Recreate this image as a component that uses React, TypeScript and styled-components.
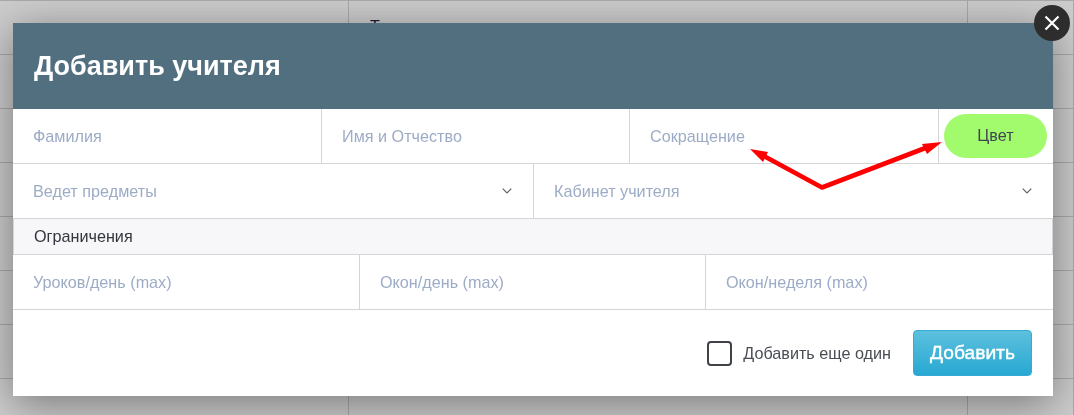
import React from "react";
import styled, { createGlobalStyle } from "styled-components";

const GlobalStyle = createGlobalStyle`
	html, body {
		margin: 0;
		padding: 0;
		height: 100%;
		overflow: hidden;
		background: #fff;
		font-family: "Liberation Sans", Arial, sans-serif;
	}
`;

const ScheduleTable = styled.div`
	display: flex;
	flex-direction: column;
	width: 1074px;
`;

const ScheduleRow = styled.div`
	border-top: 1px solid #d4d4d4;
	box-sizing: border-box;
	display: grid;
	grid-template-columns: 349px 619px 1fr;
	height: 54px;
`;

const ScheduleCell = styled.div`
	border-right: 1px solid #d4d4d4;
	box-sizing: border-box;
	color: #1d2b4f;
	font-size: 16px;
	padding: 17px 21px;
`;

const Overlay = styled.div`
	background: rgba(0, 0, 0, 0.2);
	inset: 0;
	position: fixed;
`;

const Modal = styled.div`
	background: #fff;
	box-shadow: 0 8px 40px rgba(0, 0, 0, 0.42);
	display: flex;
	flex-direction: column;
	left: 13px;
	position: absolute;
	top: 23px;
	width: 1040px;
`;

const Header = styled.div`
	align-items: center;
	background: #526f80;
	box-sizing: border-box;
	display: flex;
	height: 86px;
	padding: 0 21px;
`;

const Title = styled.h2`
	color: #fff;
	font-size: 27px;
	font-weight: bold;
	margin: 0;
`;

const CloseButton = styled.button`
	align-items: center;
	background: #2d2d2d;
	border: 0;
	border-radius: 50%;
	display: flex;
	height: 36px;
	justify-content: center;
	padding: 0;
	position: absolute;
	right: -17px;
	top: -18px;
	width: 36px;
`;

const FieldRow = styled.div<{ $columns: string }>`
	border-bottom: 1px solid #d5d5d5;
	box-sizing: border-box;
	display: grid;
	grid-template-columns: ${({ $columns }) => $columns};
	height: 55px;
`;

const Field = styled.div`
	align-items: center;
	border-right: 1px solid #d5d5d5;
	box-sizing: border-box;
	color: #9dacc6;
	display: flex;
	font-size: 16.2px;
	justify-content: space-between;
	padding: 0 21px 0 20px;

	&:last-child {
		border-right: 0;
	}
`;

const ColorCell = styled.div`
	align-items: center;
	display: flex;
	justify-content: flex-end;
	padding-right: 6px;
`;

const ColorPill = styled.div`
	align-items: center;
	background: #a2fb6d;
	border-radius: 22px;
	box-sizing: border-box;
	color: #3f4650;
	display: flex;
	font-size: 16.2px;
	height: 44px;
	justify-content: center;
	padding-bottom: 2px;
	width: 103px;
`;

const SectionTitle = styled.div`
	align-items: center;
	background: #f7f7f9;
	border-bottom: 1px solid #d5d5d5;
	border-left: 1px solid #d5d5d5;
	border-right: 1px solid #d5d5d5;
	box-sizing: border-box;
	color: #33363d;
	display: flex;
	font-size: 16.2px;
	height: 36px;
	padding: 0 20px;
`;

const Footer = styled.div`
	align-items: center;
	display: flex;
	height: 86px;
	justify-content: flex-end;
	padding-right: 21px;
`;

const CheckLabel = styled.label`
	align-items: center;
	color: #4a4d55;
	display: flex;
	font-size: 16.2px;
	gap: 11px;
	margin-right: 22px;
`;

const CheckBox = styled.span`
	border: 2px solid #3f4246;
	border-radius: 4px;
	box-sizing: border-box;
	display: block;
	height: 25px;
	width: 25px;
`;

const SubmitButton = styled.button`
	-webkit-text-stroke: 0.4px #fff;
	background: linear-gradient(#5dc0de, #28a8d2);
	border: 1px solid #35aad2;
	border-radius: 4px;
	color: #fff;
	font-family: inherit;
	font-size: 19.2px;
	font-weight: normal;
	height: 46px;
	padding: 0;
	width: 119px;
`;

const ArrowLayer = styled.svg`
	left: 0;
	pointer-events: none;
	position: absolute;
	top: 0;
`;

function Chevron() {
	return (
		<svg width="10" height="6" viewBox="0 0 10 6" fill="none">
			<path d="M.7.7 5 5 9.3.7" stroke="#5c6068" strokeWidth="1.2" />
		</svg>
	);
}

export default function App() {
	const rows = Array.from({ length: 8 }, (_, i) => i);

	return (
		<>
			<GlobalStyle />
			<ScheduleTable>
				{rows.map((row) => (
					<ScheduleRow key={row}>
						<ScheduleCell />
						<ScheduleCell>{row === 0 ? "Текст" : ""}</ScheduleCell>
						<ScheduleCell />
					</ScheduleRow>
				))}
			</ScheduleTable>
			<Overlay>
				<Modal>
					<Header>
						<Title>Добавить учителя</Title>
					</Header>
					<CloseButton aria-label="Закрыть">
						<svg width="16" height="16" viewBox="0 0 16 16">
							<path d="M1.5 1.5 14.5 14.5M14.5 1.5 1.5 14.5" stroke="#fff" strokeWidth="2.2" />
						</svg>
					</CloseButton>
					<FieldRow $columns="309px 308px 309px 1fr">
						<Field>Фамилия</Field>
						<Field>Имя и Отчество</Field>
						<Field>Сокращение</Field>
						<ColorCell>
							<ColorPill>Цвет</ColorPill>
						</ColorCell>
					</FieldRow>
					<FieldRow $columns="521px 1fr">
						<Field>
							Ведет предметы
							<Chevron />
						</Field>
						<Field>
							Кабинет учителя
							<Chevron />
						</Field>
					</FieldRow>
					<SectionTitle>Ограничения</SectionTitle>
					<FieldRow $columns="347px 346px 1fr">
						<Field>Уроков/день (max)</Field>
						<Field>Окон/день (max)</Field>
						<Field>Окон/неделя (max)</Field>
					</FieldRow>
					<Footer>
						<CheckLabel>
							<CheckBox />
							Добавить еще один
						</CheckLabel>
						<SubmitButton>Добавить</SubmitButton>
					</Footer>
				</Modal>
				<ArrowLayer width="1074" height="415">
					<path d="M762 155 822 187.5 928 147" stroke="#fe0000" strokeWidth="4.6" strokeLinejoin="round" fill="none" />
					<path d="M750 149 768 152 763 162Z" fill="#fe0000" />
					<path d="M942 142 922 144 927 154Z" fill="#fe0000" />
				</ArrowLayer>
			</Overlay>
		</>
	);
}
